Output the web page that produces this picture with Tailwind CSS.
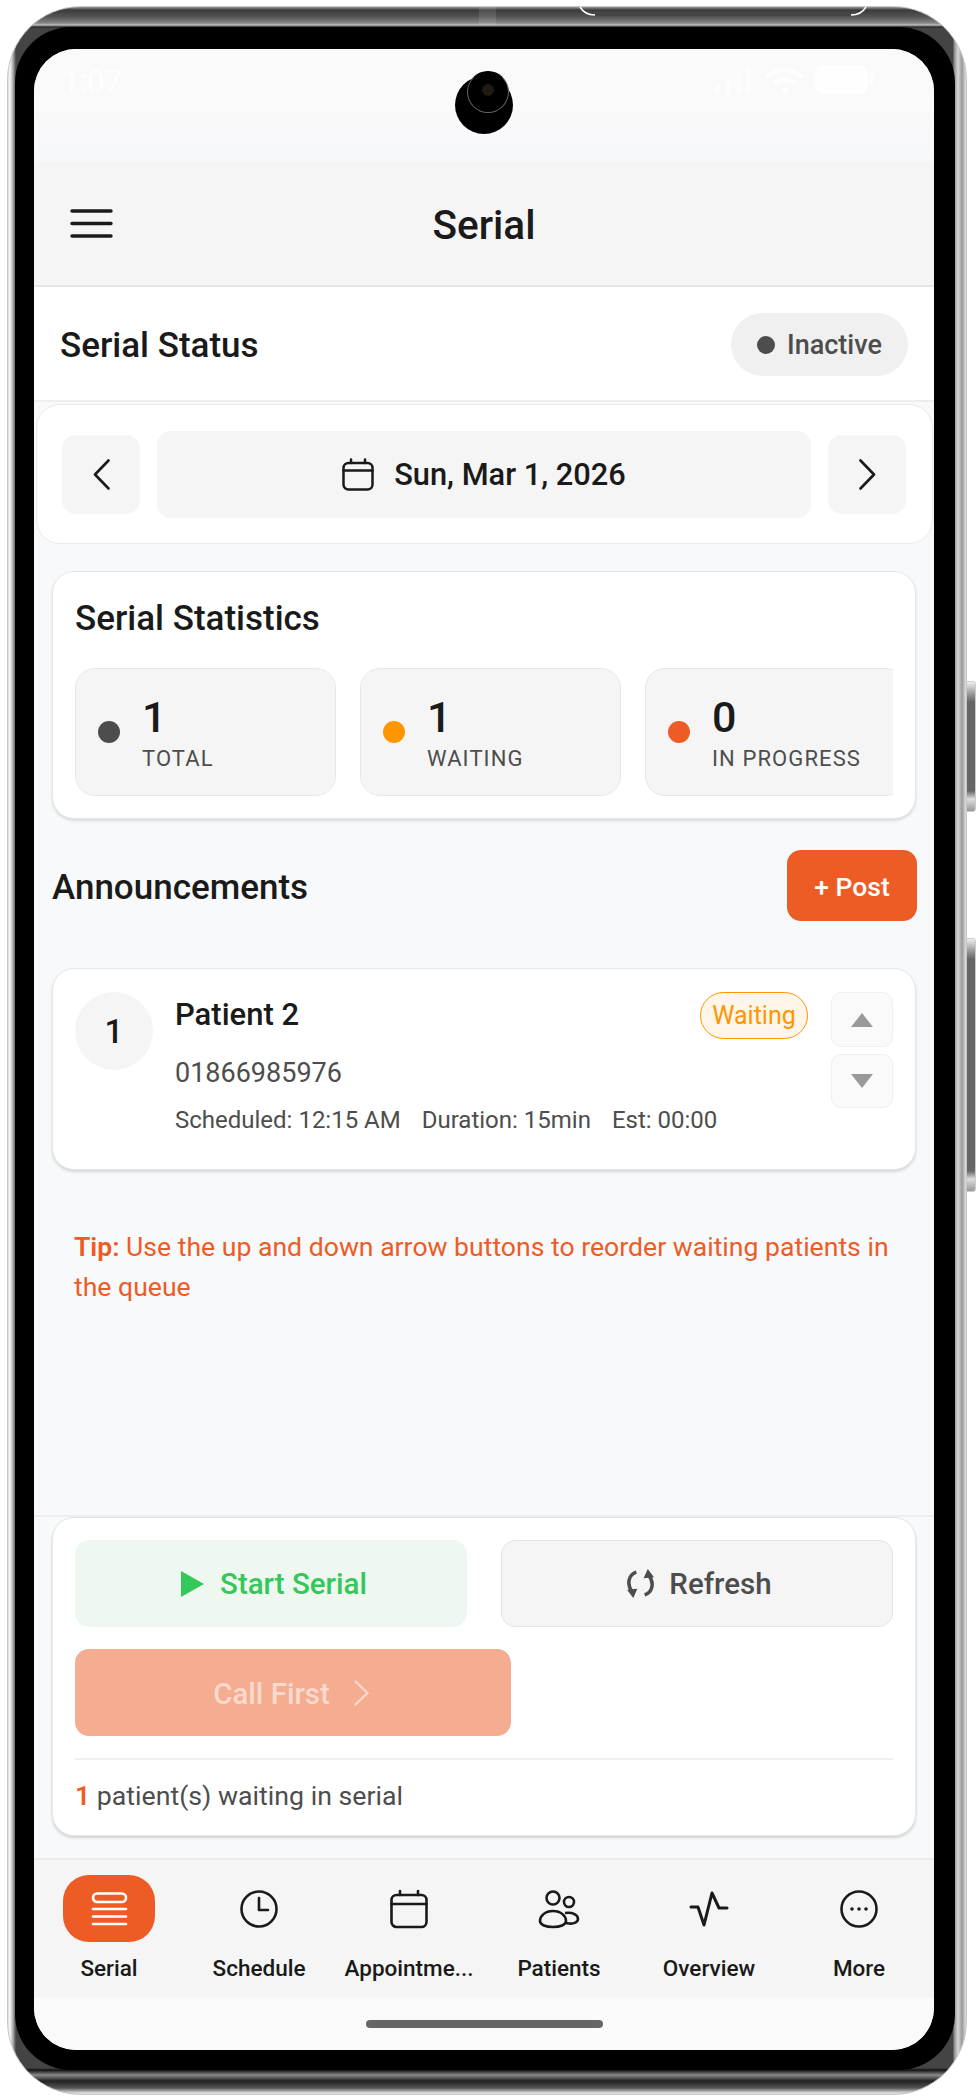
<!DOCTYPE html>
<html lang="en">
<head>
<title>Serial</title>
<meta charset="utf-8">
<script src="https://cdn.jsdelivr.net/npm/@tailwindcss/browser@4"></script>
</head>
<body class="relative w-[978px] h-[2100px] overflow-hidden bg-white font-['Roboto',sans-serif] text-[#1a1a1a]">

<!-- side buttons -->
<div class="absolute left-[962px] top-[681px] w-[14px] h-[131px] rounded-[3px] border border-[#ccc] bg-[linear-gradient(to_bottom,#eee,#999_12px,#666_20px,#666_calc(100%-20px),#ddd_calc(100%-12px),#999)]"></div>
<div class="absolute left-[962px] top-[938px] w-[14px] h-[254px] rounded-[3px] border border-[#ccc] bg-[linear-gradient(to_bottom,#eee,#999_12px,#666_20px,#666_calc(100%-20px),#ddd_calc(100%-12px),#999)]"></div>

<!-- phone body -->
<div class="absolute left-[7px] top-[6px] w-[960px] h-[2089px] rounded-[74px] border border-[#c8c8c8] bg-[linear-gradient(to_bottom,#999_0,#3a3a3a_3px,#555_10px,#858585_16px,#c0c0c0_18px,#222_20px,transparent_21px,transparent_calc(100%-26px),#111_calc(100%-24px),#8a8a8a_calc(100%-19px),#222_calc(100%-13px),#555_calc(100%-6px),#ddd_calc(100%-1px)),linear-gradient(to_right,#ddd_0,#f8f8f8_2px,#aaa_5px,#444_8px,#444_calc(100%-13px),#888_calc(100%-12px),#d8d8d8_calc(100%-8px),#999_calc(100%-4px),#e0e0e0_100%)]"></div>
<div class="absolute left-[479px] top-[7px] w-[17px] h-[18px] bg-white/10"></div>
<svg class="absolute left-[578px] top-[6px]" width="290" height="12" viewBox="0 0 290 12" fill="none" stroke="#fff" stroke-width="1.500"><path d="M2 1c3 5 7 8 15 8M288 1c-3 5-7 8-15 8"/><path d="M17 9h256" stroke="#000" stroke-opacity=".15"/></svg>
<!-- bezel -->
<div class="absolute left-[15px] top-[27px] w-[940px] h-[2043px] rounded-[56px] bg-black"></div>

<!-- screen -->
<div class="absolute left-[34px] top-[49px] w-[900px] h-[2001px] rounded-[42px] overflow-hidden bg-[#f8f9fb] flex flex-col">

  <!-- status bar -->
  <div class="relative h-[113px] shrink-0 bg-[linear-gradient(to_bottom,#fafafa,#fafafa_50%,#f7f8fa)]">
    <span class="absolute left-[28px] top-[10px] text-[31px] text-white/80">1:07</span>
    <svg class="absolute left-[681px] top-[16px] opacity-70" width="165" height="32" viewBox="0 0 165 32" fill="#fff">
      <rect x="0" y="20" width="5" height="9" rx="2"/><rect x="11" y="14" width="5" height="15" rx="2"/><rect x="21" y="8" width="5" height="21" rx="2"/><rect x="31" y="2" width="5" height="27" rx="2"/>
      <path d="M53 11a26 26 0 0 1 33 0M60 18a15 15 0 0 1 19 0" fill="none" stroke="#fff" stroke-width="4.500" stroke-linecap="round"/><circle cx="69.500" cy="26" r="3.500"/>
      <rect x="100" y="0" width="53" height="29" rx="8"/><rect x="155" y="9" width="3" height="11" rx="1"/>
    </svg>
    <div class="absolute left-[421px] top-[27px] w-[58px] h-[58px] rounded-full bg-black"></div>
    <div class="absolute left-[433px] top-[22px] w-[42px] h-[42px] rounded-full bg-black border border-[#666] border-t-black"></div>
    <div class="absolute left-[448px] top-[35px] w-[12px] h-[12px] rounded-full bg-[#1f1a12]"></div>
  </div>

  <!-- header -->
  <header class="relative h-[125px] shrink-0 flex items-center justify-center bg-[#f5f5f5] border-b-2 border-[#e6e6e6]">
    <svg class="absolute left-[36px] top-[47px]" width="43" height="30" viewBox="0 0 43 30" stroke="#1a1a1a" stroke-width="3.400" stroke-linecap="round"><path d="M2 2h39M2 14.500h39M2 27h39"/></svg>
    <h1 class="text-[40.500px] leading-none font-[550] mt-[3px]">Serial</h1>
  </header>

  <!-- serial status -->
  <div class="h-[115px] shrink-0 flex items-center justify-between pl-[26px] pr-[26px] pt-[2px] bg-white border-b-2 border-[#eeeeee]">
    <h2 class="text-[35px] font-[550] leading-none mt-[2px]">Serial Status</h2>
    <div class="h-[63px] w-[177px] rounded-full bg-[#f0f0f0] flex items-center justify-center gap-[12px]">
      <span class="w-[18px] h-[18px] rounded-full bg-[#4d4d4d]"></span>
      <span class="text-[27px] text-[#4d4d4d] font-medium mt-[1px]">Inactive</span>
    </div>
  </div>

  <!-- date picker -->
  <div class="h-[140px] shrink-0 ml-[2px] mr-[1px] mt-[2px] rounded-[24px] bg-white border border-[#e8eaee] flex items-center justify-between pl-[25px] pr-[26px]">
    <button class="w-[78px] h-[79px] rounded-[14px] bg-[#f5f5f5] flex items-center justify-center">
      <svg width="17" height="31" viewBox="0 0 17 31" fill="none" stroke="#1a1a1a" stroke-width="2.600" stroke-linecap="round" stroke-linejoin="round"><path d="M15.500 1.500 2 15.500l13.500 14"/></svg>
    </button>
    <div class="w-[654px] h-[87px] rounded-[14px] bg-[#f5f5f5] flex items-center justify-center gap-[20px]">
      <svg width="32" height="33" viewBox="0 0 32 33" fill="none" stroke="#1a1a1a" stroke-width="2.500" stroke-linecap="round"><rect x="1.500" y="5" width="29" height="26.500" rx="5"/><path d="M1.500 12.500h29M9 1.500v3.500M23 1.500v3.500"/></svg>
      <span class="text-[30.800px] font-[550] mt-[2px]">Sun, Mar 1, 2026</span>
    </div>
    <button class="w-[78px] h-[79px] rounded-[14px] bg-[#f5f5f5] flex items-center justify-center">
      <svg width="17" height="31" viewBox="0 0 17 31" fill="none" stroke="#1a1a1a" stroke-width="2.600" stroke-linecap="round" stroke-linejoin="round"><path d="M1.500 1.500 15 15.500 1.500 29.500"/></svg>
    </button>
  </div>

  <!-- statistics -->
  <section class="h-[248px] shrink-0 mx-[18px] mt-[27px] rounded-[22px] bg-white border border-[#e4e6ea] shadow-[0_2px_3px_rgba(0,0,0,0.12)] px-[22px] pt-[26px]">
    <h2 class="text-[35px] font-[550] leading-[42px]">Serial Statistics</h2>
    <div class="mt-[28px] flex gap-[24px] overflow-hidden">
      <div class="w-[261px] h-[128px] shrink-0 rounded-[20px] bg-[#f5f5f5] border border-[#e8e8e8] flex items-center pl-[22px] gap-[22px]">
        <span class="w-[22px] h-[22px] rounded-full bg-[#4d4d4d]"></span>
        <div><div class="text-[43px] leading-[50px] font-[550]">1</div><div class="text-[22px] leading-[26px] tracking-[1.100px] text-[#4d4d4d] mt-[4px]">TOTAL</div></div>
      </div>
      <div class="w-[261px] h-[128px] shrink-0 rounded-[20px] bg-[#f5f5f5] border border-[#e8e8e8] flex items-center pl-[22px] gap-[22px]">
        <span class="w-[22px] h-[22px] rounded-full bg-[#ff9500]"></span>
        <div><div class="text-[43px] leading-[50px] font-[550]">1</div><div class="text-[22px] leading-[26px] tracking-[1.100px] text-[#4d4d4d] mt-[4px]">WAITING</div></div>
      </div>
      <div class="w-[261px] h-[128px] shrink-0 rounded-[20px] bg-[#f5f5f5] border border-[#e8e8e8] flex items-center pl-[22px] gap-[22px]">
        <span class="w-[22px] h-[22px] rounded-full bg-[#ee5c26]"></span>
        <div><div class="text-[43px] leading-[50px] font-[550]">0</div><div class="text-[22px] leading-[26px] tracking-[1.100px] text-[#4d4d4d] mt-[4px]">IN PROGRESS</div></div>
      </div>
    </div>
  </section>

  <!-- announcements -->
  <div class="mt-[31px] ml-[18px] mr-[17px] h-[71px] shrink-0 flex items-center justify-between">
    <h2 class="text-[35px] font-[550] leading-none mt-[3px]">Announcements</h2>
    <button class="w-[130px] h-[71px] rounded-[14px] bg-[#ee5c26] text-white text-[26.500px] font-[550] pt-[2px]">+ Post</button>
  </div>

  <!-- patient -->
  <article class="mt-[47px] mx-[18px] h-[202px] shrink-0 rounded-[22px] bg-white border border-[#e4e6ea] shadow-[0_2px_3px_rgba(0,0,0,0.14)] flex pl-[22px] pr-[22px] pt-[23px]">
    <div class="w-[78px] h-[78px] shrink-0 rounded-full bg-[#f5f5f5] flex items-center justify-center text-[33px] font-[550] pt-[2px]">1</div>
    <div class="ml-[22px] flex-1 min-w-0">
      <div class="text-[31px] leading-[40px] font-[550] mt-[3px]">Patient 2</div>
      <div class="text-[27px] leading-[34px] text-[#4d4d4d] mt-[21px]">01866985976</div>
      <div class="text-[24px] leading-[30px] text-[#4d4d4d] mt-[15px] flex gap-[21px] whitespace-nowrap"><span>Scheduled: 12:15 AM</span><span>Duration: 15min</span><span>Est: 00:00</span></div>
    </div>
    <div class="w-[108px] h-[47px] shrink-0 rounded-full bg-[#fff6e9] border border-[#ff9500] text-[#ff9500] text-[25px] flex items-center justify-center">Waiting</div>
    <div class="ml-[23px] w-[62px] shrink-0 flex flex-col gap-[7px]">
      <button class="h-[55px] rounded-[10px] bg-[#fafafa] border border-[#f0f0f0] flex items-center justify-center"><svg width="22" height="14" viewBox="0 0 22 14" fill="#9a9a9a"><path d="M11 0 22 14H0Z"/></svg></button>
      <button class="h-[54px] rounded-[10px] bg-[#fafafa] border border-[#f0f0f0] flex items-center justify-center"><svg width="22" height="14" viewBox="0 0 22 14" fill="#9a9a9a"><path d="M11 14 0 0H22Z"/></svg></button>
    </div>
  </article>

  <!-- tip -->
  <p class="mt-[57px] ml-[40px] w-[825px] text-[26.600px] leading-[40px] text-[#ee5c26]"><b class="font-semibold">Tip:</b> Use the up and down arrow buttons to reorder waiting patients in the queue</p>

  <div class="flex-1"></div>

  <!-- actions -->
  <div class="border-t-2 border-[#eeeeee] h-[343px] shrink-0">
    <section class="mx-[18px] h-[319px] rounded-[22px] bg-white border border-[#e4e6ea] shadow-[0_2px_3px_rgba(0,0,0,0.16)] px-[22px] pt-[22px]">
      <div class="flex gap-[34px]">
        <button class="w-[392px] h-[87px] rounded-[14px] bg-[#eef8f1] text-[#34c759] text-[29.500px] font-[550] flex items-center justify-center gap-[16px] pl-[6px]">
          <svg width="23" height="26" viewBox="0 0 23 26" fill="#34c759"><path d="M0 0 23 13 0 26Z"/></svg><span class="mt-[1px]">Start Serial</span>
        </button>
        <button class="w-[392px] h-[87px] rounded-[14px] bg-[#f5f5f5] border border-[#e4e4e4] text-[#4d4d4d] text-[29.500px] font-[550] flex items-center justify-center gap-[14px] pl-[4px]">
          <svg width="29" height="29" viewBox="0 0 28 28" fill="none" stroke="#4d4d4d" stroke-width="3.400"><path d="M10 3C3 5 0 14 6 22M18 25C25 23 28 14 22 6"/><path d="M1 20l10-1-4 9zM27 8l-10 1 4-9z" fill="#4d4d4d" stroke="none"/></svg><span class="mt-[1px]">Refresh</span>
        </button>
      </div>
      <button class="mt-[22px] w-[436px] h-[87px] rounded-[14px] bg-[#f5ad92] text-[#fbd9cc] text-[29.500px] font-[550] flex items-center justify-center gap-[24px] pr-[4px]"><span class="mt-[3px]">Call First</span>
        <svg width="15" height="26" viewBox="0 0 15 26" fill="none" stroke="#fbd9cc" stroke-width="2.400" stroke-linecap="round" stroke-linejoin="round"><path d="M1.500 1.500 13.500 13 1.500 24.500"/></svg>
      </button>
      <div class="mt-[22px] border-t-2 border-[#f0f0f0] pt-[19px] text-[26.700px] leading-[34px] text-[#4d4d4d]"><span class="font-semibold text-[#ee5c26]">1</span> patient(s) waiting in serial</div>
    </section>
  </div>

  <!-- tab bar -->
  <nav class="h-[139px] shrink-0 bg-[#f5f5f5] border-t-2 border-[#ececec] flex text-[22.500px] font-medium">
    <div class="flex-1 flex flex-col items-center">
      <div class="mt-[15px] w-[92px] h-[67px] rounded-[26px] bg-[#ee5c26] flex items-center justify-center">
        <svg width="37" height="34" viewBox="0 0 37 34" fill="none" stroke="#fff" stroke-width="2.600" stroke-linecap="round"><rect x="2" y="1.500" width="33" height="8.500" rx="4.200"/><path d="M2 17h33M2 24.500h33M2 32h33"/></svg>
      </div>
      <span class="mt-[12px] leading-[28px]">Serial</span>
    </div>
    <div class="flex-1 flex flex-col items-center">
      <svg class="mt-[29px]" width="40" height="40" viewBox="0 0 40 40" fill="none" stroke="#1a1a1a" stroke-width="2.600" stroke-linecap="round" stroke-linejoin="round"><circle cx="20" cy="20" r="17.500"/><path d="M20 9v12h9"/></svg>
      <span class="mt-[25px] leading-[28px]">Schedule</span>
    </div>
    <div class="flex-1 flex flex-col items-center">
      <svg class="mt-[29px]" width="40" height="40" viewBox="0 0 40 40" fill="none" stroke="#1a1a1a" stroke-width="2.600" stroke-linecap="round"><rect x="2.500" y="6" width="35" height="32" rx="5"/><path d="M2.500 15h35M11 2v4M29 2v4"/></svg>
      <span class="mt-[25px] leading-[28px]">Appointme...</span>
    </div>
    <div class="flex-1 flex flex-col items-center">
      <svg class="mt-[29px]" width="42" height="40" viewBox="0 0 42 40" fill="none" stroke="#1a1a1a" stroke-width="2.600"><circle cx="15" cy="9" r="6.500"/><circle cx="31" cy="13" r="5"/><path d="M15 22C7 22 2 27 2 32c0 4 6 6 13 6s13-2 13-6c0-5-5-10-13-10Z"/><path d="M27 24c8-1 13 2 13 6 0 3-4 5-9 4.500-1 0-3-.5-4-1"/></svg>
      <span class="mt-[25px] leading-[28px]">Patients</span>
    </div>
    <div class="flex-1 flex flex-col items-center">
      <svg class="mt-[29px]" width="40" height="40" viewBox="0 0 40 40" fill="none" stroke="#1a1a1a" stroke-width="3" stroke-linecap="round" stroke-linejoin="round"><path d="M2 18h7l6 18L23 4l7 15h8"/></svg>
      <span class="mt-[25px] leading-[28px]">Overview</span>
    </div>
    <div class="flex-1 flex flex-col items-center">
      <svg class="mt-[29px]" width="40" height="40" viewBox="0 0 40 40" fill="none" stroke="#1a1a1a" stroke-width="2.600"><circle cx="20" cy="20" r="17.500"/><circle cx="13" cy="20" r="1.800" fill="#1a1a1a" stroke="none"/><circle cx="20" cy="20" r="1.800" fill="#1a1a1a" stroke="none"/><circle cx="27" cy="20" r="1.800" fill="#1a1a1a" stroke="none"/></svg>
      <span class="mt-[25px] leading-[28px]">More</span>
    </div>
  </nav>

  <!-- gesture area -->
  <div class="h-[53px] shrink-0 bg-[#fafafa] flex justify-center pt-[23px]">
    <div class="w-[237px] h-[8px] rounded-full bg-[#666666]"></div>
  </div>
</div>
</body>
</html>
